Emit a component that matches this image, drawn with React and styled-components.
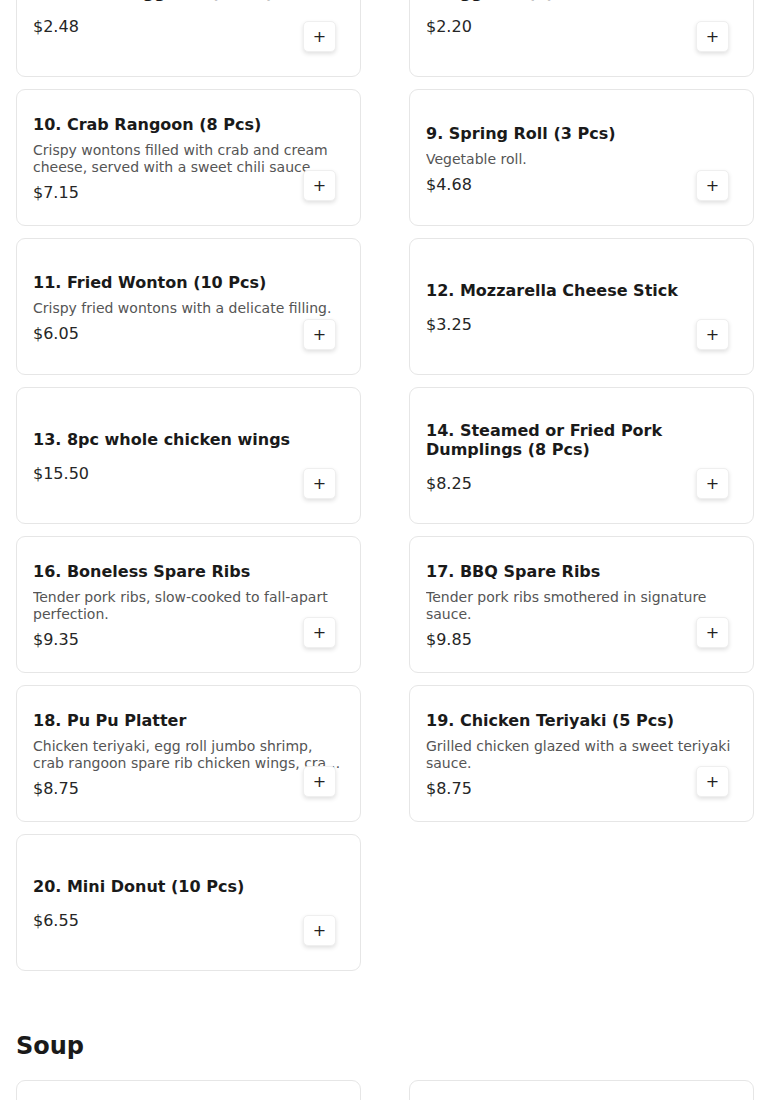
import React from 'react'
import styled, { createGlobalStyle } from 'styled-components'

const GlobalStyle = createGlobalStyle`
    body {
        margin: 0;
        background: #ffffff;
        font-family: "DejaVu Sans", "Liberation Sans", sans-serif;
        color: #1f1f1f;
    }
`

// the screenshot is taken part way down the menu, so the list starts above the fold
const Page = styled.main`
    padding: 0 16px;
    margin-top: -60px;
`

const Section = styled.section`
    margin-bottom: 61px;
`

const SectionTitle = styled.h2`
    margin: 0 0 19px;
    font-size: 24px;
    line-height: 29px;
    font-weight: 700;
    color: #1a1a1a;
`

const Grid = styled.div`
    display: grid;
    grid-template-columns: 1fr 1fr;
    column-gap: 48px;
    row-gap: 12px;
`

const Card = styled.article`
    position: relative;
    box-sizing: border-box;
    min-height: 137px;
    padding: 17px 16px 15px;
    background: #fff;
    border: 1px solid #e6e6e6;
    border-radius: 9px;
    display: flex;
    flex-direction: column;
    justify-content: center;
`

const Title = styled.h3`
    margin: 0 0 8px;
    font-size: 16px;
    line-height: 19px;
    font-weight: 700;
    color: #1a1a1a;
`

const Description = styled.p`
    margin: 0;
    font-size: 14px;
    line-height: 17px;
    color: #555;
    display: -webkit-box;
    -webkit-line-clamp: 2;
    -webkit-box-orient: vertical;
    overflow: hidden;
    text-overflow: ellipsis;
`

const Price = styled.span`
    display: block;
    margin-top: 7px;
    font-size: 16px;
    line-height: 19px;
    color: #262626;
`

const AddButton = styled.button`
    position: absolute;
    right: 24px;
    bottom: 24px;
    width: 33px;
    height: 31px;
    padding: 0;
    display: flex;
    align-items: center;
    justify-content: center;
    background: #fff;
    border: 1px solid #efefef;
    border-radius: 5px;
    box-shadow: 0 2px 4px rgba(0, 0, 0, 0.12);
    font-family: "DejaVu Sans", sans-serif;
    font-size: 16px;
    line-height: 1;
    color: #222;
    cursor: pointer;
`

const appetizers = [
    { name: '7. Chicken Egg Roll (2 Pcs)', price: '2.48' },
    { name: '8. Egg Roll (1)', price: '2.20' },
    {
        name: '10. Crab Rangoon (8 Pcs)',
        desc: 'Crispy wontons filled with crab and cream cheese, served with a sweet chili sauce.',
        price: '7.15'
    },
    { name: '9. Spring Roll (3 Pcs)', desc: 'Vegetable roll.', price: '4.68' },
    { name: '11. Fried Wonton (10 Pcs)', desc: 'Crispy fried wontons with a delicate filling.', price: '6.05' },
    { name: '12. Mozzarella Cheese Stick', price: '3.25' },
    { name: '13. 8pc whole chicken wings', price: '15.50' },
    { name: '14. Steamed or Fried Pork Dumplings (8 Pcs)', price: '8.25' },
    { name: '16. Boneless Spare Ribs', desc: 'Tender pork ribs, slow-cooked to fall-apart perfection.', price: '9.35' },
    { name: '17. BBQ Spare Ribs', desc: 'Tender pork ribs smothered in signature sauce.', price: '9.85' },
    {
        name: '18. Pu Pu Platter',
        desc: 'Chicken teriyaki, egg roll jumbo shrimp, crab rangoon spare rib chicken wings, crab claws.',
        price: '8.75'
    },
    { name: '19. Chicken Teriyaki (5 Pcs)', desc: 'Grilled chicken glazed with a sweet teriyaki sauce.', price: '8.75' },
    { name: '20. Mini Donut (10 Pcs)', price: '6.55' }
]

const soups = [
    { name: '21. Wonton Soup', price: '3.95' },
    { name: '22. Egg Drop Soup', price: '3.95' }
]

function MenuItem({ item }) {
    return (
        <Card>
            <Title>{item.name}</Title>
            {item.desc && <Description>{item.desc}</Description>}
            <Price>${item.price}</Price>
            <AddButton aria-label={'Add ' + item.name}>+</AddButton>
        </Card>
    )
}

export default function App() {
    return (
        <>
            <GlobalStyle />
            <Page>
                <Section>
                    <Grid>
                        {appetizers.map(item => <MenuItem key={item.name} item={item} />)}
                    </Grid>
                </Section>
                <Section>
                    <SectionTitle>Soup</SectionTitle>
                    <Grid>
                        {soups.map(item => <MenuItem key={item.name} item={item} />)}
                    </Grid>
                </Section>
            </Page>
        </>
    )
}
